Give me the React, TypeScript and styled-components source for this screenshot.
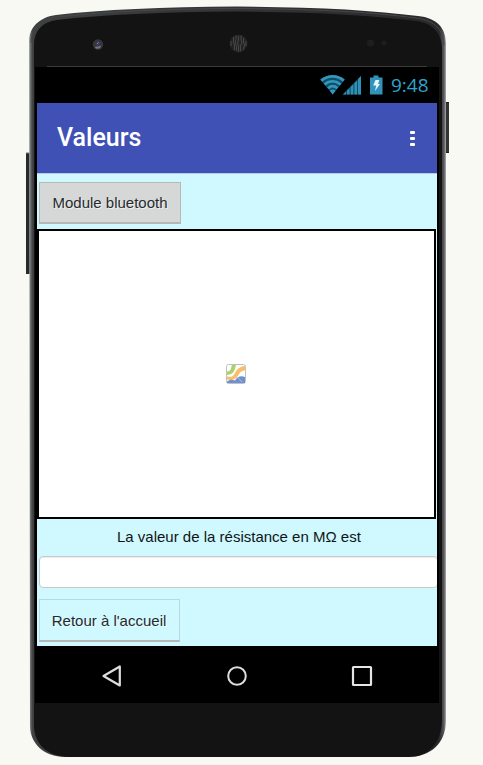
import React from "react";
import styled, { createGlobalStyle } from "styled-components";

const GlobalStyle = createGlobalStyle`
  html, body { margin: 0; background: #f8f9f3; }
  * { box-sizing: border-box; }
`;

const Page = styled.main`
  position: relative;
  width: 483px;
  height: 765px;
  overflow: hidden;
  padding: 67px 44px 0 35px;
  background: #f8f9f3;
`;

const DeviceArt = styled.svg`
  position: absolute;
  inset: 0;
`;

const Display = styled.div`
  position: relative;
  display: flex;
  flex-direction: column;
  height: 636px;
  padding: 0 2px;
  background: #000;
`;

const StatusBar = styled.div`
  display: flex;
  align-items: center;
  justify-content: flex-end;
  height: 36px;
  padding-right: 8px;
  color: #2fa3cf;
  font: 19px/36px "Open Sans", sans-serif;
`;

const StatusIcons = styled.svg`
  margin-right: 7px;
`;

const Clock = styled.span`
  width: 38px;
  white-space: nowrap;
`;

const TitleBar = styled.header`
  display: flex;
  align-items: center;
  justify-content: space-between;
  height: 70px;
  padding: 0 22px 0 20px;
  background: #3f51b5;
`;

const Title = styled.h1`
  margin: 0;
  color: #fff;
  font: 500 25px/30px Roboto, sans-serif;
`;

const MenuDots = styled.div`
  display: flex;
  flex-direction: column;
  gap: 3px;
`;

const Dot = styled.span`
  width: 5px;
  height: 3px;
  border-radius: 1px;
  background: #fff;
`;

const Form = styled.section`
  display: flex;
  flex-direction: column;
  align-items: flex-start;
  height: 473px;
  padding-top: 8px;
  border-top: 1px solid #b9c9e4;
  background: #cff8ff;
  overflow: hidden;
  font-family: "Liberation Sans", Arial, sans-serif;
`;

const FormButton = styled.button<{ $filled?: boolean }>`
  flex: none;
  width: ${(p) => (p.$filled ? 142 : 141)}px;
  height: ${(p) => (p.$filled ? 42 : 43)}px;
  margin-left: 2px;
  padding: ${(p) => (p.$filled ? "0" : "2px 1px 0 0")};
  border: 1px solid ${(p) => (p.$filled ? "#b7b9b9" : "#bad8dd")};
  border-bottom: 2px solid #b5b7b7;
  border-radius: 0;
  background: ${(p) => (p.$filled ? "#d6d8d7" : "#cff8ff")};
  color: #262b2d;
  font: 15px/20px "Liberation Sans", Arial, sans-serif;
  text-shadow: 1px 1px 0 rgba(255, 255, 255, 0.6);
`;

const MapCanvas = styled.div`
  display: flex;
  flex: none;
  align-items: center;
  justify-content: center;
  width: 399px;
  height: 290px;
  margin-top: 5px;
  padding-right: 1px;
  border: 2px solid #000;
  background: #fff;
`;

const Label = styled.p`
  width: 400px;
  height: 37px;
  margin: 0;
  padding: 8px 0 0 80px;
  color: #101416;
  font-size: 15px;
  line-height: 20px;
  white-space: nowrap;
`;

const Field = styled.input`
  flex: none;
  width: 399px;
  height: 32px;
  margin: 0 0 11px 2px;
  border: 1px solid #c6caca;
  border-radius: 4px;
  background: #fff;
  box-shadow: inset 0 1px 1px rgba(0, 0, 0, 0.08);
  outline: none;
`;

const NavBar = styled.nav`
  display: flex;
  align-items: center;
  justify-content: space-between;
  height: 57px;
  padding: 3px 64px 0;
`;

function Device() {
  const body =
    "M29 42 C29 26 41 17 56 15 Q125 7 237 6.5 Q350 7 418 16 C437 18 446 28 446 44 L446 720 C446 744 430 757 408 757 L65 757 C44 757 30 743 30 726 Z";
  return (
    <DeviceArt width="483" height="765" viewBox="0 0 483 765" aria-hidden="true">
      <defs>
        <linearGradient id="edge">
          <stop offset="0" stopColor="#b2b4b2" />
          <stop offset=".004" stopColor="#65686a" />
          <stop offset=".009" stopColor="#3d3f40" />
          <stop offset=".984" stopColor="#29292b" />
          <stop offset=".995" stopColor="#58585b" />
          <stop offset="1" stopColor="#aaaab0" />
        </linearGradient>
        <clipPath id="shell"><path d={body} /></clipPath>
      </defs>
      <rect x="26" y="153" width="5" height="121" fill="#29292a" />
      <path d="M26 153h4" stroke="#777" />
      <rect x="445" y="102" width="4" height="51" fill="#343434" />
      <path d="M445 102.5h4M445 152.5h4" stroke="#1d1d1d" />
      <path d={body} fill="url(#edge)" />
      <g clipPath="url(#shell)">
        <path d="M34 45C34 31 42 22 57 20Q126 12 237 11.5Q350 12 416 21C433 23 442 34 442 48V719C442 744 428 757 408 757H70C46 757 34 743 34 725Z" fill="#131313" />
        <path d="M31 43C31 28 42 19 57 17Q126 9 237 8.5Q350 9 416 18C435 20 444 31 444 45" fill="none" stroke="#45484a" />
      </g>
      <path d="M47 66.5H427" stroke="#3b3b3b" />
      <circle cx="98" cy="44.5" r="5.2" fill="#373737" />
      <path d="M95.5 47q2.5 2 5-1" fill="none" stroke="#777779" strokeWidth="1.8" />
      <circle cx="97.5" cy="43.8" r="2.3" fill="#34396b" />
      <path d="M97 44l1.7-1.7" stroke="#858992" />
      <circle cx="238.5" cy="43.5" r="9" fill="#232323" />
      <path
        d="M231 41v5M233.5 37v5l1 3v5M236 35.5v4l-1 3 1.5 4v4M238.5 36v4l-1 3 1 3v6M241 35.5v4l1 3-1.5 3v6M243.5 38v4l1 3-1.5 5M246 41v5"
        fill="none" stroke="#4c4c4c" strokeWidth=".9"
      />
      <circle cx="370.5" cy="43" r="3.5" fill="#1e1e1e" />
      <circle cx="384" cy="43" r="2.5" fill="#1e1e1e" />
    </DeviceArt>
  );
}

function Indicators() {
  return (
    <StatusIcons width="64" height="24" viewBox="0 0 64 24" aria-hidden="true">
      <path d="M.3 6.8C7 .9 18 .9 24.7 6.8L12.7 21.5Z" fill="#154b60" />
      <g fill="none" stroke="#2f98c0" strokeWidth="2.8">
        <path d="M1.2 7.6C8 2 17.5 2 23.8 7.6" />
        <path d="M4.6 11.5C9.5 7.3 15.5 7.3 20.6 11.5" />
        <path d="M8 15.2C10.8 12.6 14.6 12.6 17.4 15.2" />
      </g>
      <path d="M9.7 17.5Q12.7 15.4 15.7 17.5L12.7 21.5Z" fill="#2f98c0" />
      <path d="M22.5 21.5L41 3v18.5z" fill="#154b60" />
      <path d="M23 21.5l3-3v3zM27 21.5v-4l2.6-2.6v6.6zM30.7 21.5v-7.7l2.6-2.6v10.3zM34.4 21.5V10L37 7.4v14.1zM38 21.5V6l3-3v18.5z" fill="#2c91b8" />
      <path d="M50 4.5h3.5v-2h5v2H62.5v17H50z" fill="#3093b9" />
      <path d="M55.5 7h3.8l-1.2 4H60l-5 7 1.2-5.5h-3z" fill="#e5f5f8" />
    </StatusIcons>
  );
}

function MapPlaceholder() {
  return (
    <svg width="20" height="20" viewBox="0 0 20 20" role="img" aria-label="Map">
      <rect x=".5" y=".5" width="19" height="19" rx="2" fill="#fff" stroke="#c1c1c1" />
      <path d="M6 1h4.2C8.5 5 9 10.5 1 11V7.5C5.5 7 4.8 4 6 1z" fill="#acd36b" />
      <path d="M1 12.5c4.5 1 6 0 8-3.5 2-4 4.5-6.5 10-7v4.2c-5 .8-5.5 3.3-7.5 6.3S6 16.5 1 15.5z" fill="#f8be69" />
      <path d="M1 17.5c3-2.5 5.5-2 8-1 2-3 5-5.5 10-3.5V19H1z" fill="#6f91d0" />
      <path d="M12 13.5l4 4.5" stroke="#a9bde3" />
    </svg>
  );
}

export default function App() {
  return (
    <>
      <GlobalStyle />
      <Page>
        <Device />
        <Display>
          <StatusBar><Indicators /><Clock>9:48</Clock></StatusBar>
          <TitleBar>
            <Title>Valeurs</Title>
            <MenuDots><Dot /><Dot /><Dot /></MenuDots>
          </TitleBar>
          <Form>
            <FormButton $filled>Module bluetooth</FormButton>
            <MapCanvas><MapPlaceholder /></MapCanvas>
            <Label>La valeur de la résistance en MΩ est</Label>
            <Field aria-label="Valeur de la résistance" />
            <FormButton>Retour à l'accueil</FormButton>
          </Form>
          <NavBar>
            <svg width="22" height="24" viewBox="0 0 22 24"><path d="M2.5 12L18.8 2.5v19z" fill="none" stroke="#ddd" strokeWidth="2.2" strokeLinejoin="round" /></svg>
            <svg width="22" height="24" viewBox="0 0 22 24"><circle cx="11" cy="12" r="8.8" fill="none" stroke="#ddd" strokeWidth="2" /></svg>
            <svg width="22" height="24" viewBox="0 0 22 24"><rect x="2" y="3" width="18" height="18" rx=".5" fill="none" stroke="#e5e5e5" strokeWidth="2.2" /></svg>
          </NavBar>
        </Display>
      </Page>
    </>
  );
}
